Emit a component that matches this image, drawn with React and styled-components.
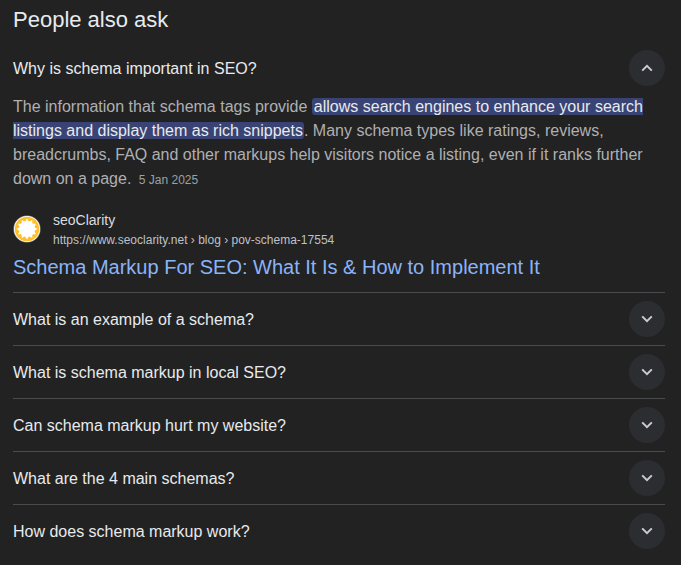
import React from "react";
import styled, { createGlobalStyle } from "styled-components";

const GlobalStyle = createGlobalStyle`
  html, body {
    margin: 0;
    background: #222222;
    font-family: "Liberation Sans", Arial, sans-serif;
  }
`;

const Page = styled.div`
  width: 681px;
  height: 565px;
  overflow: hidden;
  box-sizing: border-box;
  padding: 0 16px 0 13px;
  background: #222222;
`;

const Title = styled.h2`
  margin: 0;
  padding-top: 5px;
  height: 50px;
  box-sizing: border-box;
  font-size: 22px;
  line-height: 30px;
  font-weight: 400;
  color: #e8eaed;
`;

const Row = styled.div`
  display: flex;
  align-items: center;
  justify-content: space-between;
  height: ${props => (props.$first ? "36px" : "52px")};
  border-top: ${props => (props.$first ? "none" : "1px solid #4a4b4d")};
`;

const Question = styled.div`
  padding-top: 2px;
  font-size: 16px;
  line-height: 24px;
  color: #e8eaed;
`;

const Toggle = styled.div`
  width: 36px;
  height: 36px;
  border-radius: 50%;
  background: #2c2d30;
  display: flex;
  align-items: center;
  justify-content: center;
`;

const Answer = styled.div`
  margin-top: 9px;
  font-size: 16px;
  line-height: 24px;
  color: #afb0b2;
`;

const Mark = styled.mark`
  background: #394374;
  color: #e8eaed;
  border-radius: 3px;
  padding: 0 1px 0 2px;
`;

const DateText = styled.span`
  margin-left: 3px;
  font-size: 12px;
  color: #9aa0a6;
`;

const Source = styled.div`
  display: flex;
  align-items: center;
  gap: 12px;
  margin-top: 17px;
  height: 40px;
`;

const Favicon = styled.div`
  width: 28px;
  height: 28px;
  flex: none;
`;

const SourceText = styled.div`
  display: flex;
  flex-direction: column;
  gap: 1px;
`;

const SiteName = styled.div`
  font-size: 14px;
  line-height: 20px;
  color: #dadce0;
`;

const Url = styled.div`
  font-size: 12px;
  line-height: 18px;
  color: #bdc1c6;
`;

const ResultLink = styled.a`
  display: block;
  margin-top: 5px;
  padding-bottom: 12px;
  font-size: 20px;
  line-height: 26px;
  color: #8ab4f8;
  text-decoration: none;
`;

const Chevron = ({ up }) => (
  <svg width="24" height="24" viewBox="0 0 24 24" fill="none" stroke="#c9ccd4" strokeWidth="2">
    <path d={up ? "M7.2 14.6 12 9.8l4.8 4.8" : "M7.2 9.4 12 14.2l4.8-4.8"} />
  </svg>
);

const Logo = () => {
  const rays = Array.from({ length: 12 }, (_, i) => i * 30);
  return (
    <svg width="28" height="28" viewBox="0 0 28 28">
      <circle cx="14" cy="14" r="13.6" fill="#8f8f8f" />
      <circle cx="14" cy="14" r="13" fill="#ffffff" />
      <circle cx="14" cy="14" r="12.2" fill="#fdc02a" />
      {rays.map(a => (
        <path key={a} d="M14 3.5 16.2 7.2 11.8 7.2Z" fill="#ffffff" transform={`rotate(${a} 14 14)`} />
      ))}
      <circle cx="14" cy="14" r="7.8" fill="#ffffff" />
    </svg>
  );
};

const others = [
  "What is an example of a schema?",
  "What is schema markup in local SEO?",
  "Can schema markup hurt my website?",
  "What are the 4 main schemas?",
  "How does schema markup work?",
];

export default function App() {
  return (
    <Page>
      <GlobalStyle />
      <Title>People also ask</Title>
      <Row $first>
        <Question>Why is schema important in SEO?</Question>
        <Toggle><Chevron up /></Toggle>
      </Row>
      <Answer>
        The information that schema tags provide <Mark>allows search engines to enhance your search listings and display them as rich snippets</Mark>. Many schema types like ratings, reviews, breadcrumbs, FAQ and other markups help visitors notice a listing, even if it ranks further down on a page. <DateText>5 Jan 2025</DateText>
      </Answer>
      <Source>
        <Favicon><Logo /></Favicon>
        <SourceText>
          <SiteName>seoClarity</SiteName>
          <Url>https://www.seoclarity.net › blog › pov-schema-17554</Url>
        </SourceText>
      </Source>
      <ResultLink href="#">Schema Markup For SEO: What It Is &amp; How to Implement It</ResultLink>
      {others.map(q => (
        <Row key={q}>
          <Question>{q}</Question>
          <Toggle><Chevron /></Toggle>
        </Row>
      ))}
    </Page>
  );
}
